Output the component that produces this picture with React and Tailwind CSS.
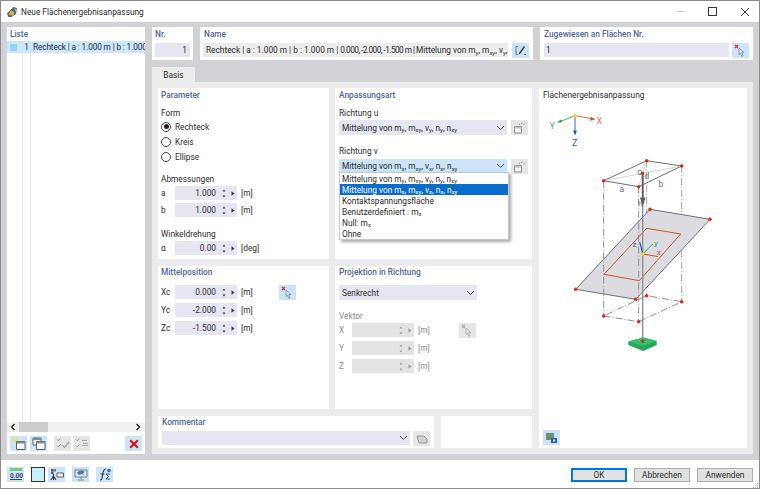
import React from "react";

const F = { fontFamily: 'Roboto, "Noto Sans", "Liberation Sans", sans-serif' };

function Sub({ children }) {
  return <sub className="text-[6px] leading-none">{children}</sub>;
}

function Mits({ a }) {
  return (
    <span className="whitespace-nowrap">
      Mittelung von m<Sub>{a}</Sub>, m<Sub>xy</Sub>, v<Sub>{a}</Sub>, n<Sub>{a}</Sub>, n<Sub>xy</Sub>
    </span>
  );
}

function IconBtn({ children, tone = "blue", className = "" }) {
  const bg = tone === "blue" ? "bg-[#cce4f7]" : "bg-[#e6e6e6]";
  return (
    <div className={`w-[17px] h-[15px] flex items-center justify-center shrink-0 ${bg} ${className}`}>{children}</div>
  );
}

function Pick({ on = true }) {
  const c = on ? "#7c8a98" : "#a8a8a8";
  return (
    <svg width="13" height="13" viewBox="0 0 13 13">
      <path d="M1 1l3 3M4 1L1 4" stroke={on ? "#d9263a" : "#a8a8a8"} strokeWidth="1.2" />
      <path d="M5 4l5 4.500-2.400.2 1.400 3-1.200.5-1.400-3L5 10.500z" fill="#e8e8e8" stroke={c} strokeWidth=".8" />
    </svg>
  );
}

function Chev({ c = "#555" }) {
  return (
    <svg width="9" height="6" viewBox="0 0 9 6" className="shrink-0">
      <path d="M1 1l3.500 3.500L8 1" fill="none" stroke={c} strokeWidth="1" />
    </svg>
  );
}

function Spin({ value, disabled }) {
  const c = disabled ? "#999" : "#333";
  return (
    <div className={`w-[62px] h-[14px] flex items-center shrink-0 ${disabled ? "bg-[#e3e3e3]" : "bg-[#e6e6f2]"}`}>
      <span className="flex-1 text-right pr-[2px]">{value}</span>
      <svg width="19" height="11" viewBox="0 0 19 11" className="shrink-0">
        <path d="M4.500 3.500l1.500-2 1.500 2zM4.500 7.500l1.500 2 1.500-2z" fill={c} />
        <path d="M13.500 3.200v4.600l3-2.300z" fill={c} />
      </svg>
    </div>
  );
}

function Row({ label, value, unit, disabled, w = "w-[14px]" }) {
  return (
    <div className={`h-[14px] flex items-center ${disabled ? "text-[#8d8d8d]" : ""}`}>
      <span className={`${w} shrink-0`}>{label}</span>
      <Spin value={value} disabled={disabled} />
      <span className="ml-[4px]">{unit}</span>
    </div>
  );
}

function Radio({ label, on }) {
  return (
    <div className="h-[15px] flex items-center gap-[4px]">
      <span className="w-[10px] h-[10px] rounded-full border border-[#444] bg-white flex items-center justify-center">
        {on && <span className="w-[5px] h-[5px] rounded-full bg-[#222]" />}
      </span>
      <span>{label}</span>
    </div>
  );
}

function Heading({ children }) {
  return <div className="text-[#4f6896] font-medium h-[10px]">{children}</div>;
}

function CopyIcon() {
  return (
    <svg width="13" height="12" viewBox="0 0 13 12">
      <path d="M1.500 4.500h7v6.500h-7z" fill="#f4f4f4" stroke="#8a8a8a" />
      <path d="M1.500 4.500h7v2h-7z" fill="#bdbdbd" />
      <path d="M8 2l1.500-1.500M10.500 3L12 1.500M6 1.500l.8 1.600" stroke="#a0a0a0" />
    </svg>
  );
}

function WinIcon({ sun, dbl }) {
  return (
    <svg width="14" height="13" viewBox="0 0 14 13">
      {dbl && <path d="M1 1h8v7H1z" fill="#eef3fa" stroke="#58626e" />}
      {dbl && <path d="M1 1h8v2H1z" fill="#7f8c9b" />}
      <path d="M4.500 4.500h8.500v8H4.500z" fill="#f7fafd" stroke="#58626e" />
      <path d="M4.500 4.500h8.500v2H4.500z" fill="#7f8c9b" />
      {sun && <path d="M3.500 0l.9 2.100 2.100.9-2.100.9-.9 2.100-.9-2.100L.5 3l2.100-.9z" fill="#ffdf2e" />}
    </svg>
  );
}

function CheckIcon({ v }) {
  return (
    <svg width="14" height="12" viewBox="0 0 14 12">
      <path d="M1 1.500l1.200 1.200L4.500.5M1 7.500l1.200 1.200L4.500 6.500" fill="none" stroke="#8a8a8a" strokeWidth=".9" />
      {v ? (
        <path d="M6.500 7l2 2.500L13 4" fill="none" stroke="#a0a0a0" strokeWidth="1.200" />
      ) : (
        <path d="M7 2.500h5M7 7.500h6M8 5.500h5" stroke="#a8a8a8" strokeWidth="1" />
      )}
    </svg>
  );
}

function Drawing() {
  const dots = [
    [646.7, 160.7], [681.7, 166], [603.7, 180.7], [638.7, 186.7], [642.5, 173.3],
    [650, 209.3], [575.7, 289.3], [635.7, 299.3], [710, 219.3],
    [603.7, 316], [638.7, 321.7], [681.7, 301.7], [646.7, 295.7], [642.7, 341],
  ];
  return (
    <svg width="208" height="360" viewBox="539 88 208 360" className="absolute inset-0 pointer-events-none">
      {/* coordinate axes */}
      <path d="M575 115.700l-16 6.300" stroke="#3cb371" strokeWidth="1" />
      <path d="M557 122.800l4-3.500 1 3z" fill="#2e9e5f" />
      <path d="M575 115.700l17 3" stroke="#e2694a" strokeWidth="1" />
      <path d="M595.500 119.200l-5-2.500v4z" fill="#d9481c" />
      <path d="M575 115.700v16" stroke="#2f62c9" strokeWidth="1" />
      <path d="M575 135.500l-2-5h4z" fill="#2452b4" />
      <circle cx="575" cy="115.700" r="1.800" fill="#f7d51d" />
      <text x="549.500" y="128.500" fontSize="9" fill="#3cb371">Y</text>
      <text x="596.500" y="123.500" fontSize="9" fill="#e2694a">X</text>
      <text x="572" y="146" fontSize="9" fill="#2f62c9">Z</text>

      {/* dash-dot lower verticals behind the plane */}
      <g stroke="#a2a2ac" strokeWidth="1" strokeDasharray="7 2 1 2" fill="none">
        <path d="M646.700 160.700V296" />
        <path d="M681.700 166v136" />
      </g>

      {/* gray plane */}
      <path d="M575.700 289.300L650 209.300l60 10-74.300 80z" fill="#dcdce0" stroke="#6d6d80" strokeWidth="1" />

      {/* top box */}
      <path d="M603.700 180.700l43-20 35 5.300-43 20.700z" fill="none" stroke="#6d6d80" strokeWidth="1" />
      <path d="M603.700 180.700l78-14.700M646.700 160.700l-8 26" stroke="#c9c9cf" strokeWidth=".8" fill="none" />

      {/* dash-dot on top of the plane */}
      <g stroke="#8f8f9a" strokeWidth="1" strokeDasharray="7 2 1 2" fill="none">
        <path d="M603.700 180.700V316" />
        <path d="M638.700 186.700v135" />
        <path d="M603.700 316l35 5.700 43-20-35-6-43 20.300" />
      </g>

      {/* inner rectangle */}
      <path d="M604 274.300l42.700-46 34 5.700-41.400 46.700z" fill="none" stroke="#c9552d" strokeWidth="1" />

      {/* stem */}
      <path d="M642.700 173v168" stroke="#8a8a96" strokeWidth="1.300" />
      <path d="M642.700 173v26" stroke="#5c5c68" strokeWidth="1.800" />
      <path d="M642.700 206.500l-2.800-9h5.600z" fill="#5c5c68" />

      {/* local axes */}
      <path d="M642.700 254l-3-12" stroke="#2452b4" strokeWidth="1.100" />
      <path d="M642.700 254l10-10" stroke="#2eaa64" strokeWidth="1" />
      <path d="M642.700 254l15 2.500" stroke="#d9481c" strokeWidth="1" />
      <circle cx="642.700" cy="254" r="1.800" fill="#f7d51d" />
      <text x="632.500" y="247" fontSize="8" fill="#2f62c9">z</text>
      <text x="654" y="246" fontSize="8" fill="#2eaa64">y</text>
      <text x="657" y="255" fontSize="7.500" fill="#d9481c">x</text>

      {/* labels */}
      <text x="619.500" y="192" fontSize="8.500" fill="#6d6d80">a</text>
      <text x="658.500" y="187" fontSize="8.500" fill="#6d6d80">b</text>
      <text x="637.500" y="174.500" fontSize="8.500" fill="#6d6d80">c</text>
      <text x="644.500" y="178.500" fontSize="8.500" fill="#6d6d80">d</text>
      <text x="638" y="206" fontSize="8" fill="#7c7c88">h</text>

      {/* base */}
      <path d="M628.300 345v-3.500l15-4 13.400 3.500v4l-13.400 6z" fill="#23a65a" />
      <path d="M628.300 341.500l15-4 13.400 3.500-13.400 5z" fill="#35bd70" />

      {dots.map(([x, y], i) => (
        <circle key={i} cx={x} cy={y} r="1.800" fill="#d4300c" />
      ))}
    </svg>
  );
}

export default function App() {
  return (
    <div
      style={F}
      className="w-[760px] h-[489px] bg-white border border-[#8c8c8c] flex flex-col text-[8.3px] leading-[10px] text-[#2b2b2b] overflow-hidden"
    >
      {/* Title bar */}
      <div className="h-[21px] shrink-0 flex items-center pl-[5px] pr-[9px]">
        <svg width="12" height="12" viewBox="0 0 12 12" className="mr-[3px]">
          <path d="M1 7.500L7.500 1l3.500 1-1 6-4.500 3H2.500z" fill="#4d6282" />
          <path d="M2.500 8.500l2.500-4 3.500 1.500-1.500 4z" fill="#dcb03a" />
          <path d="M8 2.500l2.500.5-.5 3z" fill="#a9bcd6" />
        </svg>
        <span>Neue Flächenergebnisanpassung</span>
        <div className="ml-auto flex items-center">
          <div className="w-[7px] h-px bg-[#c8c8c8]" />
          <div className="ml-[24px] w-[9px] h-[9px] border border-[#333]" />
          <svg width="10" height="10" viewBox="0 0 10 10" className="ml-[23px]">
            <path d="M1 1l8 8M9 1l-8 8" stroke="#333" />
          </svg>
        </div>
      </div>

      {/* Body */}
      <div className="h-[438px] bg-[#d2d2d6] pt-[5px] px-[6px] flex gap-[7px] shrink-0">
        {/* Liste */}
        <div className="w-[138px] h-[427px] bg-white flex flex-col shrink-0">
          <div className="h-[14px] pt-[2px] pl-[3px] text-[#4f6896] font-medium shrink-0">Liste</div>
          <div className="h-[12px] bg-[#cce8ff] flex items-center overflow-hidden shrink-0">
            <span className="w-[7px] h-[7px] ml-[3px] bg-[#93d4f8] shrink-0" />
            <span className="w-[12px] text-right shrink-0">1</span>
            <span className="ml-[4px] whitespace-nowrap tracking-[-0.15px]">Rechteck | a : 1.000 m | b : 1.000</span>
          </div>
          <div className="flex-1 flex">
            <div className="w-[16px] border-r border-[#e9e9e9]" />
            <div className="w-[8px] border-r border-[#e9e9e9]" />
          </div>
          <div className="h-[10px] bg-[#f0f0f0] flex items-center shrink-0">
            <div className="w-[12px] flex justify-center">
              <svg width="6" height="8" viewBox="0 0 6 8"><path d="M4.500 1L1.500 4l3 3" fill="none" stroke="#222" strokeWidth="1.300" /></svg>
            </div>
            <div className="w-[29px] h-full bg-[#cdcdcd]" />
            <div className="flex-1" />
            <div className="w-[14px] flex justify-center">
              <svg width="6" height="8" viewBox="0 0 6 8"><path d="M1.500 1l3 3-3 3" fill="none" stroke="#222" strokeWidth="1.300" /></svg>
            </div>
          </div>
          <div className="h-[22px] flex items-start pt-[4px] px-[3px] shrink-0">
            <IconBtn><WinIcon sun /></IconBtn>
            <IconBtn className="ml-[3px]"><WinIcon dbl /></IconBtn>
            <IconBtn tone="gray" className="ml-[7px]"><CheckIcon v /></IconBtn>
            <IconBtn tone="gray" className="ml-[2px]"><CheckIcon /></IconBtn>
            <IconBtn className="ml-auto">
              <svg width="10" height="10" viewBox="0 0 10 10"><path d="M1.200 1.200l7.600 7.600M8.800 1.200L1.200 8.800" stroke="#e01010" strokeWidth="2.200" /></svg>
            </IconBtn>
          </div>
        </div>

        {/* Right */}
        <div className="flex-1 flex flex-col min-w-0">
          {/* Top row */}
          <div className="h-[33px] flex gap-[7px] shrink-0">
            <div className="w-[41px] bg-white px-[3px] pt-[2px]">
              <div className="text-[#4f6896] font-medium h-[14px]">Nr.</div>
              <div className="h-[14px] bg-[#e6e6f2] flex items-center justify-end pr-[3px]">1</div>
            </div>
            <div className="w-[333px] bg-white px-[3px] pt-[2px]">
              <div className="text-[#4f6896] font-medium h-[14px] pl-[1px]">Name</div>
              <div className="flex gap-[4px]">
                <div className="w-[305px] h-[14px] bg-[#ececec] flex items-center pl-[3px] overflow-hidden whitespace-nowrap">
                  <span>Rechteck | a : 1.000 m | b : 1.000 m | <span className="tracking-[-0.55px]">0.000, -2.000, -1.500 m | </span>Mittelung von m<Sub>y</Sub>, m<Sub>xy</Sub>, v<Sub>y</Sub>,</span>
                </div>
                <IconBtn className="h-[14px]">
                  <svg width="12" height="11" viewBox="0 0 12 11">
                    <path d="M3 1.500H1v8h2M9 9.500h2" fill="none" stroke="#555" strokeWidth=".8" />
                    <path d="M4 8l5-7 1 1-5 7H3.500z" fill="#333" />
                  </svg>
                </IconBtn>
              </div>
            </div>
            <div className="flex-1 bg-white px-[4px] pt-[2px]">
              <div className="text-[#4f6896] font-medium h-[14px]">Zugewiesen an Flächen Nr.</div>
              <div className="flex gap-[3px]">
                <div className="flex-1 h-[14px] bg-[#e6e6f2] flex items-center pl-[2px]">1</div>
                <IconBtn className="h-[14px]"><Pick /></IconBtn>
              </div>
            </div>
          </div>

          {/* Tab */}
          <div className="h-[22px] flex items-end shrink-0">
            <div className="w-[43px] h-[15px] bg-[#ececec] flex items-center justify-center">Basis</div>
          </div>

          {/* Tab content */}
          <div className="h-[372px] bg-[#ececec] pt-[6px] px-[6px] flex gap-[7px]">
            <div className="w-[374px] flex flex-col gap-[7px] shrink-0">
              {/* row 1 */}
              <div className="h-[171px] flex gap-[6px] shrink-0">
                <div className="w-[171px] bg-white px-[3px] pt-[2px]">
                  <Heading>Parameter</Heading>
                  <div className="mt-[8px]">Form</div>
                  <div className="mt-[1px]">
                    <Radio label="Rechteck" on />
                    <Radio label="Kreis" />
                    <Radio label="Ellipse" />
                  </div>
                  <div className="mt-[10px]">Abmessungen</div>
                  <div className="mt-[2px] flex flex-col gap-[3px]">
                    <Row label="a" value="1.000" unit="[m]" />
                    <Row label="b" value="1.000" unit="[m]" />
                  </div>
                  <div className="mt-[12px]">Winkeldrehung</div>
                  <div className="mt-[2px]"><Row label="α" value="0.00" unit="[deg]" /></div>
                </div>
                <div className="w-[197px] bg-white px-[4px] pt-[2px] relative">
                  <Heading>Anpassungsart</Heading>
                  <div className="mt-[8px]">Richtung u</div>
                  <div className="mt-[2px] flex gap-[4px]">
                    <div className="w-[169px] h-[15px] bg-[#e6e6f2] flex items-center pl-[3px] pr-[2px] justify-between">
                      <Mits a="y" /><Chev />
                    </div>
                    <IconBtn tone="gray"><CopyIcon /></IconBtn>
                  </div>
                  <div className="mt-[11px]">Richtung v</div>
                  <div className="mt-[3px] flex gap-[4px]">
                    <div className="w-[169px] h-[14px] bg-[#cce4f7] flex items-center pl-[3px] pr-[2px] justify-between">
                      <Mits a="x" /><Chev />
                    </div>
                    <IconBtn tone="gray"><CopyIcon /></IconBtn>
                  </div>
                  {/* dropdown list */}
                  <div className="absolute left-[4px] top-[84px] w-[170px] h-[68px] bg-white border border-[#c8c8c8] shadow-[2px_2px_3px_rgba(0,0,0,0.35)] flex flex-col z-10">
                    <div className="h-[11px] shrink-0 flex items-center pl-[2px]"><Mits a="y" /></div>
                    <div className="h-[11px] shrink-0 flex items-center pl-[2px] bg-[#0a6ccb] text-white"><Mits a="x" /></div>
                    <div className="h-[11px] shrink-0 flex items-center pl-[2px]">Kontaktspannungsfläche</div>
                    <div className="h-[11px] shrink-0 flex items-center pl-[2px]"><span>Benutzerdefiniert : m<Sub>x</Sub></span></div>
                    <div className="h-[11px] shrink-0 flex items-center pl-[2px]"><span>Null: m<Sub>x</Sub></span></div>
                    <div className="h-[11px] shrink-0 flex items-center pl-[2px]">Ohne</div>
                  </div>
                </div>
              </div>
              {/* row 2 */}
              <div className="h-[143px] flex gap-[6px] shrink-0">
                <div className="w-[171px] bg-white px-[3px] pt-[1px]">
                  <Heading>Mittelposition</Heading>
                  <div className="mt-[8px] flex flex-col gap-[4px] relative">
                    <Row label="Xc" value="0.000" unit="[m]" />
                    <Row label="Yc" value="-2.000" unit="[m]" />
                    <Row label="Zc" value="-1.500" unit="[m]" />
                    <IconBtn className="absolute left-[118px] top-0"><Pick /></IconBtn>
                  </div>
                </div>
                <div className="w-[197px] bg-white px-[4px] pt-[1px]">
                  <Heading>Projektion in Richtung</Heading>
                  <div className="mt-[8px] w-[138px] h-[15px] bg-[#e6e6f2] flex items-center pl-[3px] pr-[2px] justify-between">
                    <span>Senkrecht</span><Chev />
                  </div>
                  <div className="mt-[11px] text-[#8d8d8d]">Vektor</div>
                  <div className="mt-[2px] flex flex-col gap-[4px] relative">
                    <Row label="X" value="" unit="[m]" disabled w="w-[13px]" />
                    <Row label="Y" value="" unit="[m]" disabled w="w-[13px]" />
                    <Row label="Z" value="" unit="[m]" disabled w="w-[13px]" />
                    <IconBtn tone="gray" className="absolute left-[120px] top-0"><Pick on={false} /></IconBtn>
                  </div>
                </div>
              </div>
              {/* row 3 */}
              <div className="h-[32px] flex gap-[7px] shrink-0">
                <div className="w-[276px] bg-white px-[4px] pt-[1px]">
                  <Heading>Kommentar</Heading>
                  <div className="mt-[4px] flex gap-[3px]">
                    <div className="w-[248px] h-[14px] bg-[#e6e6f2] flex items-center justify-end pr-[2px]"><Chev /></div>
                    <IconBtn tone="gray" className="h-[14px]">
                      <svg width="12" height="10" viewBox="0 0 12 10"><path d="M1 2h7l3 3v4H3z" fill="#d0d0d0" stroke="#9a9a9a" /></svg>
                    </IconBtn>
                  </div>
                </div>
                <div className="w-[92px] bg-white" />
              </div>
            </div>
            {/* Drawing panel */}
            <div className="w-[208px] h-[360px] bg-white relative px-[4px] pt-[2px]">
              <div>Flächenergebnisanpassung</div>
              <Drawing />
              <IconBtn className="absolute left-[4px] bottom-[3px]">
                <svg width="13" height="12" viewBox="0 0 13 12">
                  <path d="M1 1h8v7H1z" fill="#7a8a7a" />
                  <path d="M2 4l3-2 3 2-3 2z" fill="#42a85f" />
                  <path d="M6 6h6v5H6z" fill="#2f5f9e" />
                  <path d="M8 7.500h2v2H8z" fill="#dce6f2" />
                </svg>
              </IconBtn>
            </div>
          </div>
        </div>
      </div>

      {/* Footer */}
      <div className="flex-1 flex items-center pl-[6px] pr-[6px] relative">
        <IconBtn>
          <svg width="14" height="12" viewBox="0 0 14 12">
            <path d="M1 0h12v3H1z" fill="#7fc77f" />
            <text x="1" y="9.500" fontSize="6.500" fill="#334a70" fontWeight="700">0.00</text>
            <path d="M1 11.500h12" stroke="#334a70" />
          </svg>
        </IconBtn>
        <div className="ml-[7px] w-[14px] h-[15px] bg-[#c4f2fc] border border-[#333] shrink-0" />
        <IconBtn className="ml-[3px]">
          <svg width="14" height="13" viewBox="0 0 14 13">
            <path d="M1 1h2.500v2.500H1z" fill="#d8323a" />
            <path d="M3.500 1H6v2.500H3.500z" fill="#3aa34f" />
            <path d="M1 3.500h2.500V6H1z" fill="#2f5fc0" />
            <path d="M3.500 6v6M1 12l2.500-4L6 12" fill="none" stroke="#333" strokeWidth="1.100" />
            <path d="M7 5h6.500v4H7z" fill="#f5f5f5" stroke="#58626e" />
          </svg>
        </IconBtn>
        <IconBtn className="ml-[7px]">
          <svg width="14" height="13" viewBox="0 0 14 13">
            <path d="M1 2h12v7H1z" fill="#dce6f2" stroke="#6f8296" />
            <path d="M3 5c2-3 5-3 8-1l-2 1 1 2-3-1-2 1z" fill="#5c7896" />
            <path d="M7 9v2M4 12h6" stroke="#6f8296" />
          </svg>
        </IconBtn>
        <IconBtn className="ml-[7px]">
          <svg width="14" height="13" viewBox="0 0 14 13">
            <path d="M2 12c2 0 2-1 2.500-5S6 1 8 1" fill="none" stroke="#333" strokeWidth="1.100" />
            <path d="M2.500 6h4" stroke="#333" />
            <path d="M8 6h4M8 11h4M8 6l2.500 2.500L8 11" fill="none" stroke="#445a78" />
            <circle cx="11" cy="2.500" r="1.800" fill="#3d6ba8" />
          </svg>
        </IconBtn>
        <div className="ml-auto flex gap-[7px] mt-[1px]">
          <div className="w-[56px] h-[14px] bg-[#e1e1e1] border-2 border-[#0078d7] flex items-center justify-center">OK</div>
          <div className="w-[56px] h-[14px] bg-[#e1e1e1] border border-[#adadad] flex items-center justify-center">Abbrechen</div>
          <div className="w-[56px] h-[14px] bg-[#e1e1e1] border border-[#adadad] flex items-center justify-center">Anwenden</div>
        </div>
        <svg width="6" height="6" viewBox="0 0 6 6" className="absolute right-0 bottom-0">
          <path d="M4 1h1v1H4zM2 3h1v1H2zM4 3h1v1H4zM0 5h1v1H0zM2 5h1v1H2zM4 5h1v1H4z" fill="#b0b0b0" />
        </svg>
      </div>
    </div>
  );
}
